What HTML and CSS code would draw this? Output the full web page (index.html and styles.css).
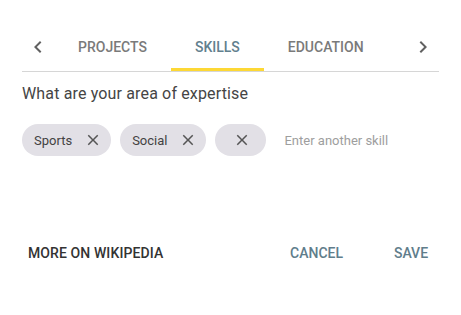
FILE: index.html
```html
<!DOCTYPE html>
<html>
<head>
	<meta charset="utf-8">
	<title>Skills</title>
	<link rel="stylesheet" href="styles.css">
</head>
<body>
	<div class="card">
		<div class="tabbar">
			<button class="arrow" aria-label="Previous">
				<svg viewBox="0 0 24 24" width="24" height="24"><path d="M15.41 7.41L14 6l-6 6 6 6 1.41-1.41L10.83 12z"/></svg>
			</button>
			<div class="tabs">
				<div class="tab">Projects</div>
				<div class="tab active">Skills</div>
				<div class="tab">Education</div>
			</div>
			<button class="arrow" aria-label="Next">
				<svg viewBox="0 0 24 24" width="24" height="24"><path d="M8.59 16.59L10 18l6-6-6-6-1.41 1.41L13.17 12z"/></svg>
			</button>
		</div>

		<p class="question">What are your area of expertise</p>

		<div class="chips">
			<span class="chip">Sports<svg class="remove" viewBox="0 0 24 24" width="18" height="18"><path d="M19 6.41L17.59 5 12 10.59 6.41 5 5 6.41 10.59 12 5 17.59 6.41 19 12 13.41 17.59 19 19 17.59 13.41 12z"/></svg></span>
			<span class="chip">Social<svg class="remove" viewBox="0 0 24 24" width="18" height="18"><path d="M19 6.41L17.59 5 12 10.59 6.41 5 5 6.41 10.59 12 5 17.59 6.41 19 12 13.41 17.59 19 19 17.59 13.41 12z"/></svg></span>
			<span class="chip empty"><svg class="remove" viewBox="0 0 24 24" width="18" height="18"><path d="M19 6.41L17.59 5 12 10.59 6.41 5 5 6.41 10.59 12 5 17.59 6.41 19 12 13.41 17.59 19 19 17.59 13.41 12z"/></svg></span>
			<input class="skill-input" type="text" placeholder="Enter another skill">
		</div>

		<div class="actions">
			<button class="btn dark">More on Wikipedia</button>
			<div class="right">
				<button class="btn">Cancel</button>
				<button class="btn">Save</button>
			</div>
		</div>
	</div>
</body>
</html>
```

FILE: styles.css
```css
* {
	box-sizing: border-box;
}

body {
	margin: 0;
	background: #fff;
	font-family: Roboto, "Noto Sans", sans-serif;
}

.card {
	padding: 23px 22px 0 22px;
}

.tabbar {
	display: flex;
	align-items: stretch;
	height: 49px;
	border-bottom: 1px solid #d6d6d6;
}

.arrow {
	width: 32px;
	padding: 0;
	border: none;
	background: none;
	display: flex;
	align-items: center;
	justify-content: center;
	fill: #616161;
}

.tabs {
	flex: 1;
	display: flex;
}

.tab {
	padding: 3px 24px 0 24px;
	height: 48px;
	display: flex;
	align-items: center;
	font-size: 14px;
	font-weight: 500;
	text-transform: uppercase;
	color: #7a7a7a;
	border-bottom: 3px solid transparent;
}

.tab.active {
	color: #62808e;
	border-bottom-color: #fdd835;
}

.question {
	margin: 10px 0 0 0;
	font-size: 16px;
	line-height: 24px;
	letter-spacing: 0.15px;
	color: #454545;
}

.chips {
	display: flex;
	align-items: center;
	gap: 9px;
	margin-top: 18px;
}

.chip {
	height: 32px;
	border-radius: 16px;
	background: #e2e0e6;
	display: inline-flex;
	align-items: center;
	padding: 0 9px 0 12px;
	font-size: 13px;
	color: #424242;
}

.chip .remove {
	margin-left: 12px;
	fill: #555;
}

.chip.empty {
	padding: 0 15px 0 18px;
}

.chip.empty .remove {
	margin-left: 0;
}

.skill-input {
	margin-left: 7px;
	border: none;
	outline: none;
	font-family: inherit;
	font-size: 13px;
	color: #424242;
	width: 150px;
	background: none;
}

.skill-input::placeholder {
	color: #9e9e9e;
}

.actions {
	display: flex;
	justify-content: space-between;
	align-items: center;
	margin-top: 79px;
}

.right {
	display: flex;
	gap: 28px;
	margin-right: -4px;
}

.btn {
	height: 36px;
	min-width: 64px;
	padding: 0 8px;
	border: none;
	background: none;
	font-family: inherit;
	font-size: 14px;
	font-weight: 500;
	text-transform: uppercase;
	color: #607d8b;
}

.btn.dark {
	color: #333;
	padding-left: 6px;
	letter-spacing: 0.1px;
}
```
